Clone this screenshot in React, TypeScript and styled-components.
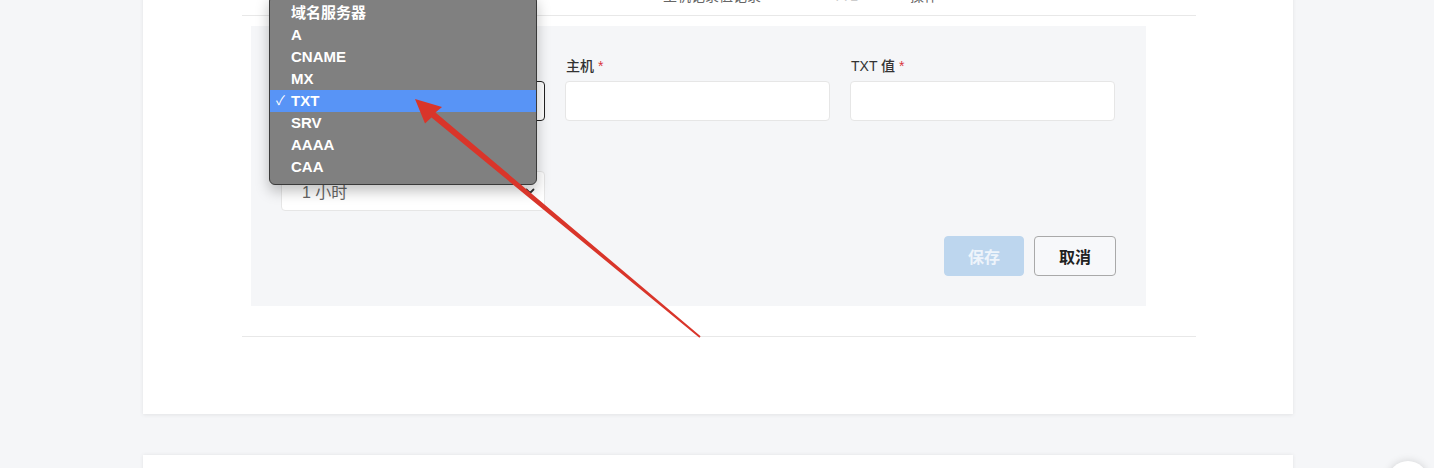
import React from "react";
import styled, { createGlobalStyle } from "styled-components";

const Global = createGlobalStyle`
  html, body { margin: 0; padding: 0; height: 100%; overflow: hidden; }
  body {
    background: #f5f6f8;
    font-family: "Liberation Sans", "Noto Sans CJK SC", sans-serif;
    color: #333;
  }
`;

const Page = styled.div`
  position: relative;
  height: 468px;
  overflow: hidden;
  padding-left: 143px;
  box-sizing: border-box;
`;

const Card = styled.div<{ $top: number }>`
  width: 1150px;
  background: #fff;
  margin-top: ${(p) => p.$top}px;
  box-shadow: 0 1px 4px rgba(0, 0, 0, 0.08);
  padding: 0 97px 0 99px;
  box-sizing: border-box;
`;

const HeaderRow = styled.div`
  display: grid;
  grid-template-columns: 421px 170px 77px 100px 1fr;
  height: 55px;
  align-items: end;
  padding-bottom: 9px;
  box-sizing: border-box;
  border-bottom: 1px solid #e8e8e8;
  font-size: 14px;
  color: #666;
  line-height: 20px;
`;

const FormPanel = styled.div`
  margin: 10px 0 0 9px;
  width: 895px;
  background: #f5f6f8;
  padding: 30px 30px 30px 30px;
  box-sizing: border-box;
`;

const Grid = styled.div`
  display: grid;
  grid-template-columns: 264px 265px 265px;
  column-gap: 20px;
  row-gap: 25px;
`;

const Field = styled.div`
  position: relative;
  display: flex;
  flex-direction: column;
  gap: 5px;
`;

const Label = styled.label`
  font-size: 14px;
  line-height: 20px;
  font-weight: 500;
  color: #333;
  padding-left: 1px;
`;

const Req = styled.span`
  color: #d9363e;
  margin-left: 4px;
`;

const Input = styled.div`
  height: 40px;
  background: #fff;
  border: 1px solid #e6e6e6;
  border-radius: 4px;
  box-sizing: border-box;
`;

const SelectBox = styled.div<{ $focused?: boolean }>`
  height: 40px;
  background: #fff;
  border: 1px solid ${(p) => (p.$focused ? "#222" : "#e6e6e6")};
  border-radius: 4px;
  box-sizing: border-box;
  display: flex;
  align-items: center;
  justify-content: space-between;
  padding: 0 8px 0 20px;
  font-size: 16px;
  color: #666;
`;

const Actions = styled.div`
  display: flex;
  justify-content: flex-end;
  gap: 10px;
  margin-top: 25px;
`;

const Button = styled.button<{ $primary?: boolean }>`
  height: 40px;
  width: ${(p) => (p.$primary ? 80 : 82)}px;
  border-radius: 4px;
  font-family: inherit;
  font-size: 16px;
  font-weight: 700;
  box-sizing: border-box;
  border: 1px solid ${(p) => (p.$primary ? "#bdd6ee" : "#a9a9a9")};
  background: ${(p) => (p.$primary ? "#bdd6ee" : "#f7f8fa")};
  color: ${(p) => (p.$primary ? "#eef4fb" : "#222")};
`;

const Divider = styled.div`
  margin-top: 30px;
  border-bottom: 1px solid #e8e8e8;
  height: 0;
`;

const CardBottom = styled.div`
  height: 77px;
`;

const SecondCard = styled.div`
  width: 1150px;
  height: 60px;
  background: #fff;
  margin-top: 41px;
  box-shadow: 0 0 4px rgba(0, 0, 0, 0.08);
`;

const Menu = styled.ul`
  position: absolute;
  left: -12px;
  top: -61px;
  width: 268px;
  margin: 0;
  padding: 6px 0;
  list-style: none;
  background: #808080;
  border: 1px solid #3a3a3a;
  border-radius: 6px;
  box-sizing: border-box;
  box-shadow: 0 6px 14px rgba(0, 0, 0, 0.25);
  z-index: 5;
`;

const MenuItem = styled.li<{ $active?: boolean }>`
  position: relative;
  height: 22px;
  line-height: 22px;
  padding-left: 21px;
  font-size: 15px;
  font-weight: 700;
  color: #fff;
  background: ${(p) => (p.$active ? "#5894f6" : "transparent")};
`;

const Check = styled.span`
  position: absolute;
  left: 6px;
  top: 0;
  font-size: 13px;
  font-weight: 400;
`;

const Arrow = styled.svg`
  position: absolute;
  left: 0;
  top: 0;
  width: 1434px;
  height: 468px;
  pointer-events: none;
  z-index: 10;
`;

const FloatBtn = styled.div`
  position: absolute;
  left: 1388px;
  top: 461px;
  width: 40px;
  height: 40px;
  border-radius: 50%;
  background: #fff;
  box-shadow: 0 0 8px rgba(0, 0, 0, 0.15);
`;

const Chevron = () => (
  <svg width="12" height="12" viewBox="0 0 12 12">
    <path d="M2.5 4.5 L6 8 L9.5 4.5" fill="none" stroke="#333" strokeWidth="1.8" strokeLinecap="round" strokeLinejoin="round" />
  </svg>
);

const options = ["域名服务器", "A", "CNAME", "MX", "TXT", "SRV", "AAAA", "CAA"];

export default function App() {
  return (
    <>
      <Global />
      <Page>
        <Card $top={-39}>
          <HeaderRow>
            <span />
            <span>主机记录值记录</span>
            <span style={{ color: "#ccc" }}>TTL</span>
            <span>操作</span>
            <span />
          </HeaderRow>
          <FormPanel>
            <Grid>
              <Field>
                <Label>
                  类型<Req>*</Req>
                </Label>
                <SelectBox $focused>
                  <span>TXT</span>
                  <Chevron />
                </SelectBox>
                <Menu>
                  {options.map((o) => (
                    <MenuItem key={o} $active={o === "TXT"}>
                      {o === "TXT" && <Check>✓</Check>}
                      {o}
                    </MenuItem>
                  ))}
                </Menu>
              </Field>
              <Field>
                <Label>
                  主机<Req>*</Req>
                </Label>
                <Input />
              </Field>
              <Field>
                <Label>
                  TXT 值<Req>*</Req>
                </Label>
                <Input />
              </Field>
              <Field>
                <Label>
                  TTL<Req>*</Req>
                </Label>
                <SelectBox>
                  <span>1 小时</span>
                  <Chevron />
                </SelectBox>
              </Field>
            </Grid>
            <Actions>
              <Button $primary>保存</Button>
              <Button>取消</Button>
            </Actions>
          </FormPanel>
          <Divider />
          <CardBottom />
        </Card>
        <SecondCard />
        <FloatBtn />
        <Arrow viewBox="0 0 1434 468">
          <polygon
            points="415,99 442,107 435.5,112.5 700.6,336.2 699.4,337.8 431.5,117.5 425,123.5"
            fill="#d9352a"
          />
        </Arrow>
      </Page>
    </>
  );
}
